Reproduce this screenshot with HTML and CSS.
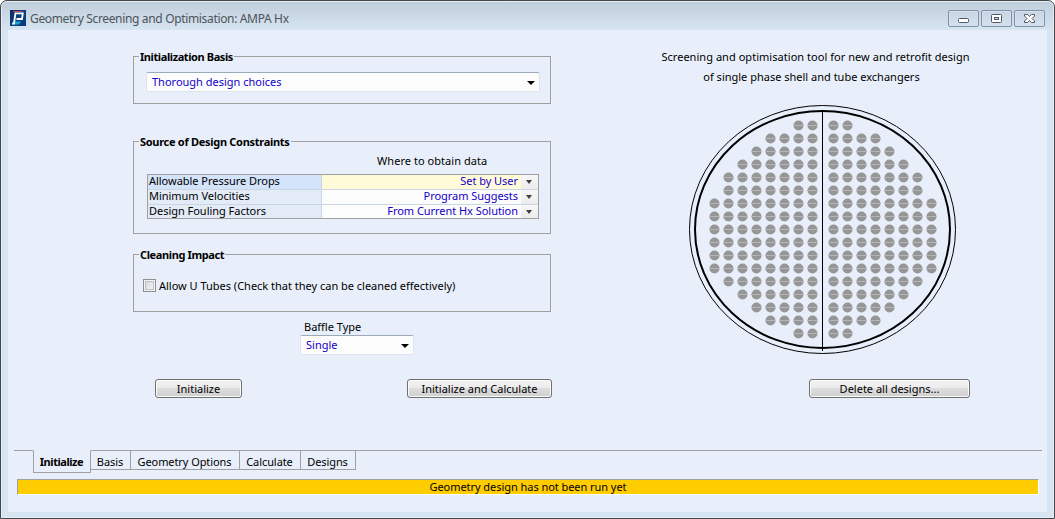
FILE: index.html
```html
<!DOCTYPE html>
<html lang="en">
<head>
<meta charset="utf-8">
<title>Geometry Screening and Optimisation: AMPA Hx</title>
<link rel="stylesheet" href="styles.css">
</head>
<body>
<div class="window">
  <header class="titlebar">
    <svg class="logo" width="16" height="16" viewBox="0 0 16 16"><defs><linearGradient id="lg" x1="0" y1="0" x2="1" y2="1"><stop offset="0" stop-color="#0a2a66"/><stop offset=".55" stop-color="#0b3f7c"/><stop offset="1" stop-color="#083a80"/></linearGradient></defs><rect width="16" height="16" fill="url(#lg)"/><path d="M5 11.500h6l-2 3H2z" fill="#19a3cf"/><path d="M3 1.500h10" stroke="#c8404c"/><path d="M5.500 3L4 13.500H2.200M4.500 3.300h8.300L12 9H6.500" fill="none" stroke="#fff" stroke-width="1.800"/></svg>
    <h1 class="title">Geometry Screening and Optimisation: AMPA Hx</h1>
    <div class="controls">
      <span class="control"><svg width="29" height="15" viewBox="0 0 29 15"><rect x="9.500" y="7.500" width="10" height="4" rx="1" fill="#fff" stroke="#535666"/></svg></span>
      <span class="control"><svg width="29" height="15" viewBox="0 0 29 15"><rect x="9.500" y="3.500" width="10" height="8" rx="1" fill="#fff" stroke="#535666"/><rect x="12.500" y="6.500" width="4" height="2" fill="#c5d1e0" stroke="#535666"/></svg></span>
      <span class="control"><svg width="29" height="15" viewBox="0 0 29 15"><path d="M9.500 3.500h3l2 2 2-2h3v1.500l-2.500 2.500 2.500 2.500v1.500h-3l-2-2-2 2h-3V10l2.500-2.500L9.500 5z" fill="#fff" stroke="#535666"/></svg></span>
    </div>
  </header>
  <main class="client">
    <div class="workspace">
      <section class="form">
        <fieldset class="group group-basis">
          <legend class="t-basis">Initialization Basis</legend>
          <div class="combo"><span>Thorough design choices</span><i class="arrow"></i></div>
        </fieldset>
        <fieldset class="group group-source">
          <legend class="t-source">Source of Design Constraints</legend>
          <div class="caption">Where to obtain data</div>
          <div class="grid">
            <div class="row selected"><div class="name">Allowable Pressure Drops</div><div class="value">Set by User</div><div class="drop"><i class="mini"></i></div></div>
            <div class="row"><div class="name">Minimum Velocities</div><div class="value">Program Suggests</div><div class="drop"><i class="mini"></i></div></div>
            <div class="row"><div class="name">Design Fouling Factors</div><div class="value">From Current Hx Solution</div><div class="drop"><i class="mini"></i></div></div>
          </div>
        </fieldset>
        <fieldset class="group group-cleaning">
          <legend class="t-cleaning">Cleaning Impact</legend>
          <label class="check"><i class="box"></i><span>Allow U Tubes (Check that they can be cleaned effectively)</span></label>
        </fieldset>
        <div class="baffle">
          <span class="baffle-label">Baffle Type</span>
          <div class="combo"><span>Single</span><i class="arrow"></i></div>
        </div>
        <div class="actions">
          <button class="btn btn-init">Initialize</button>
          <button class="btn btn-calc">Initialize and Calculate</button>
        </div>
      </section>
      <section class="preview">
        <p class="intro">Screening and optimisation tool for new and retrofit design</p>
        <p class="intro intro-second">of single phase shell and tube exchangers</p>
        <svg class="exchanger" width="270" height="252" viewBox="688 104 270 252">
          <ellipse cx="822.500" cy="229.500" rx="133" ry="124" fill="none" stroke="#000"/>
          <ellipse cx="822.500" cy="229.500" rx="127.500" ry="118.500" fill="none" stroke="#000" stroke-width="2"/>
          <path d="M822.500 111v240" stroke="#000"/>
          <g id="tubes"></g>
        </svg>
        <button class="btn btn-delete">Delete all designs...</button>
      </section>
    </div>
    <nav class="tabs">
      <div class="tab active">Initialize</div>
      <div class="tab tab-basis">Basis</div>
      <div class="tab tab-geometry">Geometry Options</div>
      <div class="tab tab-calculate">Calculate</div>
      <div class="tab tab-designs">Designs</div>
    </nav>
    <div class="status">Geometry design has not been run yet</div>
  </main>
</div>
<script src="tubes.js"></script>
</body>
</html>
```
FILE: styles.css
```css
* { box-sizing: border-box; }
body { margin: 0; background: #fff; font: 11px/15px "Noto Sans", "Open Sans", sans-serif; color: #000; overflow: hidden; }
.window { width: 1055px; height: 519px; padding: 2px 7px 7px; border: 1px solid #45474b; border-radius: 7px 7px 0 0; background: linear-gradient(#bfccda 0, #d7e4f1 29px, #d7e4f1); box-shadow: inset 0 0 0 1px #e4edf5; }
.titlebar { height: 27px; display: flex; align-items: flex-start; padding: 7px 0 0 2px; }
.logo { display: block; }
.title { margin: 0 auto 0 4px; font: 12px/17px "Noto Sans", sans-serif; color: #4d535b; white-space: nowrap; letter-spacing: -.34px; }
.controls { display: flex; gap: 2px; margin-right: 2px; }
.control { width: 31px; height: 17px; border: 1px solid #8290aa; border-radius: 2px; box-shadow: inset 0 0 0 1px #d7e1ed; }
.control svg { display: block; }
.client { height: 482px; background: #e8effa; }
.workspace { height: 420px; display: flex; }
.form { width: 545px; padding: 20px 0 0 125px; }
.group { position: relative; width: 418px; margin: 0; padding: 0; border: 1px solid #a0a0a0; min-width: 0; }
.group legend { position: absolute; top: -8px; left: 5px; padding: 0 1px; background: #e8effa; font-weight: bold; line-height: 15px; white-space: nowrap; }
.t-basis { letter-spacing: -.41px; }
.t-source { letter-spacing: -.29px; }
.t-cleaning { letter-spacing: -.38px; }
.group-basis { height: 48px; margin-top: 6px; padding: 15px 0 0 12px; }
.combo { display: flex; align-items: center; justify-content: space-between; width: 394px; height: 20px; padding: 0 4px 0 5px; border: 1px solid #dce4ed; border-top-color: #9baaba; border-radius: 2px; background: #fcfcfc; color: #1400c8; white-space: nowrap; }
.combo span { padding-bottom: 2px; }
.arrow { width: 0; height: 0; margin-top: 1px; border: 4px solid transparent; border-top-color: #000; border-bottom: 0; }
.group-source { height: 93px; margin-top: 37px; padding-top: 11px; }
.caption { padding-left: 243px; height: 21px; letter-spacing: .05px; }
.grid { width: 392px; height: 45px; margin-left: 13px; border: 1px solid #a0a0a0; }
.row { display: flex; height: 15px; line-height: 12px; border-bottom: 1px solid #cbd6e4; }
.row:last-child { height: 13px; border-bottom: 0; }
.name { width: 174px; padding-left: 1px; background: #e3ebf7; border-right: 1px solid #cbd6e4; white-space: nowrap; letter-spacing: -.03px; }
.value { width: 199px; padding-right: 3px; text-align: right; background: #fcfcfc; color: #1400c8; white-space: nowrap; letter-spacing: -.04px; }
.selected .name { background: #d3e3fa; }
.selected .value { background: #fffbd9; }
.drop { width: 17px; background: linear-gradient(#f7f7f7, #ececec); display: flex; align-items: center; justify-content: center; }
.mini { margin-right: 1px; border: 3.5px solid transparent; border-top: 4px solid #404040; border-bottom: 0; }
.group-cleaning { height: 58px; margin-top: 20px; padding: 23px 0 0 9px; }
.check { display: flex; align-items: center; gap: 3px; height: 15px; white-space: nowrap; letter-spacing: -.01px; }
.box { width: 13px; height: 13px; border: 1px solid #8e8f8f; box-shadow: inset 0 0 0 1px #f4f4f4, inset 0 0 0 2px #bcc2c8; background: linear-gradient(135deg, #cdd2d8, #f8f8f8); }
.baffle { width: 114px; margin: 7px 0 0 167px; }
.baffle-label { display: block; margin-left: 4px; height: 16px; }
.baffle .combo { width: 114px; }
.actions { display: flex; justify-content: space-between; width: 397px; margin: 24px 0 0 22px; }
.btn { display: flex; align-items: center; justify-content: center; height: 19px; padding: 0; border: 1px solid #707070; border-radius: 3px; box-shadow: inset 0 0 0 1px #fbfbfb; background: linear-gradient(#f2f2f2 0, #ebebeb 50%, #dddddd 50%, #cfcfcf); color: #000; font: inherit; white-space: nowrap; }
.btn-init { width: 87px; }
.btn-calc { width: 145px; }
.preview { width: 494px; padding-top: 17px; }
.intro { height: 20px; margin: 0 0 0 30px; line-height: 20px; text-align: center; width: 465px; white-space: nowrap; letter-spacing: .04px; }
.intro-second { margin-left: 26px; letter-spacing: 0; }
.exchanger { display: block; margin: 17px 0 0 135px; }
.btn-delete { width: 161px; margin: 23px 0 0 256px; }
.tabs { display: flex; align-items: flex-start; width: 1028px; height: 28px; margin-left: 6px; padding-left: 19px; background: linear-gradient(#a0a0a0, #a0a0a0) 0 0 / 100% 1px no-repeat; }
.tab { height: 20px; padding: 3px 1px 0 0; border: 1px solid #a0a0a0; border-left: 0; text-align: center; line-height: 15px; white-space: nowrap; letter-spacing: -.08px; }
.tab.active { width: 58px; height: 23px; border-left: 1px solid #a0a0a0; border-top-color: #e8effa; font-weight: bold; letter-spacing: -.45px; }
.tab-basis { width: 40px; }
.tab-geometry { width: 109px; }
.tab-calculate { width: 61px; }
.tab-designs { width: 55px; }
.status { width: 1022px; height: 16px; margin: 1px 0 0 9px; border: 1px solid #a0a0a0; border-right-color: #fff; border-bottom-color: #fff; background: #ffcc00; text-align: center; line-height: 14px; letter-spacing: -.05px; }
```
FILE: tubes.js
```js
// Number of tubes in each half of every row, top to bottom.
const rows = [2, 4, 5, 6, 7, 7, 8, 8, 8, 8, 8, 8, 7, 6, 5, 4, 2];
const tubes = document.getElementById("tubes");
let markup = "";
rows.forEach((count, r) => {
  const y = 125.5 + r * 13;
  for (let i = 0; i < count; i++) {
    for (const x of [812.5 - i * 14, 833.5 + i * 14]) {
      markup += `<circle cx="${x}" cy="${y}" r="5" fill="#969696"/><path d="M${x - 5} ${y}h10" stroke="#b4b5b8"/>`;
    }
  }
});
tubes.innerHTML = markup;
```
